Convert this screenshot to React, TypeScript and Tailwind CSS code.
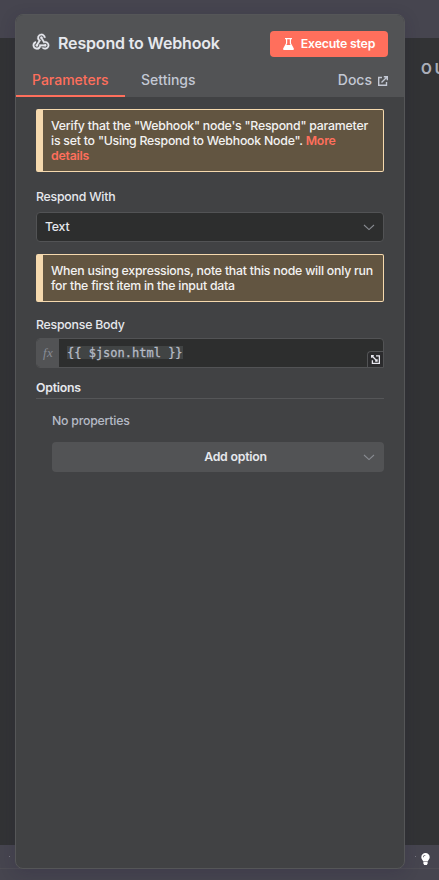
import { MdWebhook } from "react-icons/md";
import type { ReactNode } from "react";

function Chevron() {
  return (
    <svg className="h-[7px] w-3" viewBox="0 0 12 7" fill="none" stroke="#888b91" strokeWidth="1.1">
      <path d="M1 1l5 4.600L11 1" />
    </svg>
  );
}

function Notice({ children }: { children: ReactNode }) {
  return (
    <div className="rounded-[2px] border border-l-[7px] border-[#f5d9ae] bg-[#625541] py-2 pr-1 pl-2 leading-[15px] text-[#f3f2f1]">
      {children}
    </div>
  );
}

function Flask() {
  return (
    <svg className="h-3 w-[11px]" viewBox="0 0 11 12">
      <path fillRule="evenodd" fill="#fff" d="M2 0h7v1.200H8v4l2.700 5c.5 1-.1 1.800-1 1.800H1.300c-.9 0-1.500-.8-1-1.800L3 5.200v-4H2zM4.200 1.200v4.300L3.400 7h4.200L6.800 5.500V1.200z" />
    </svg>
  );
}

export default function App() {
  return (
    <div className="relative flex h-[880px] w-[439px] flex-col overflow-hidden bg-[#46454f] font-['Inter',sans-serif]">
      <div className="h-[38px] shrink-0" />
      <div className="h-[807px] shrink-0 bg-[#323335]">
        <div className="ml-[421px] pt-[22px] text-[14px] leading-[18px] font-bold tracking-[3px] whitespace-nowrap text-[#aaaeb9]">OU</div>
      </div>
      <div className="flex flex-1 justify-between pt-[11px] pl-[9px]">
        <i className="size-px bg-[#77757f]" />
        <i className="ml-[399px] size-px bg-[#77757f]" />
        <svg className="mt-[-3px] mr-[9px] h-3 w-[9px]" viewBox="0 0 9 12" fill="#fff">
          <path fillRule="evenodd" d="M4.500 0a4.200 4.200 0 0 0-4.200 4.200c0 1.800 1.500 2.700 2 4.300h4.400c.5-1.600 2-2.500 2-4.300A4.200 4.200 0 0 0 4.500 0zM2 4.200A2.300 2.300 0 0 1 4.400 2v.6A1.700 1.700 0 0 0 2.700 4.200z" />
          <path d="M2.400 9h4.200v1.600L5.800 12H3.200l-.8-1.400z" />
        </svg>
      </div>
      <div className="absolute inset-x-0 top-[868px] h-px bg-[#4e4d54]" />

      <main className="absolute top-[14px] left-[15px] flex h-[855px] w-[390px] flex-col overflow-hidden rounded-[8px] border border-[#555658] bg-[#414244] shadow-[0_4px_16px_rgba(35,25,60,0.2)]">
        <header className="flex h-[82px] shrink-0 flex-col bg-[#525355]">
          <div className="flex h-[57px] items-center px-4">
            <MdWebhook className="mb-[3px] -ml-px size-5 shrink-0 text-[#e5e7ed] [&>path:last-child]:stroke-[#e5e7ed] [&>path:last-child]:stroke-[0.3]" />
            <h1 className="mb-0.5 ml-[7px] flex-1 text-[16px] leading-5 font-semibold tracking-[-0.16px] whitespace-nowrap text-[#e6e8ed]">Respond to Webhook</h1>
            <button className="mt-px flex h-[26px] w-[118px] items-center justify-center gap-[7px] rounded-[4px] bg-[#ff6f5c] text-[12.3px] font-semibold tracking-[-0.2px] whitespace-nowrap text-white">
              <Flask />Execute step
            </button>
          </div>
          <nav className="flex h-[25px] text-[14px] leading-[16px] font-medium text-[#c3c8d4]">
            <span className="w-[109px] border-b-2 border-[#ff6f5c] pl-4 text-[#ff6f5c]">Parameters</span>
            <span className="ml-4">Settings</span>
            <span className="mr-4 ml-auto flex h-4 items-center gap-[6px]">
              Docs
              <svg className="mt-0.5 size-[10px]" viewBox="0 0 10 10" fill="none" stroke="currentColor" strokeWidth="1.4">
                <path d="M4 1.500H.7v7.800h7.800V6M3.500 6.500L9 1M5.800.7h3.500v3.500" />
              </svg>
            </span>
          </nav>
        </header>

        <section className="flex flex-col px-5 pt-3 text-[12.3px] font-medium tracking-[-0.22px] text-[#e6e8ed]">
          <Notice>
            Verify that the "Webhook" node's "Respond" parameter is set to "Using Respond to Webhook Node". <span className="font-semibold text-[#ff6f5c]">More<br />details</span>
          </Notice>
          <label className="mt-[17px] leading-4">Respond With</label>
          <div className="mt-[7px] flex h-[30px] items-center justify-between rounded-[4px] border border-[#525355] bg-[#2d2e2e] pr-2 pl-2">
            <span>Text</span><Chevron />
          </div>
          <div className="mt-3">
            <Notice>When using expressions, note that this node will only run for the first item in the input data</Notice>
          </div>
          <label className="mt-[15px] leading-4">Response Body</label>
          <div className="relative mt-[5px] flex h-[30px] overflow-hidden rounded-t-[4px] rounded-bl-[4px] border border-[#525355] bg-[#2d2e2e]">
            <span className="flex w-[22px] items-center justify-center bg-[#525355] pb-px font-['Liberation_Serif',serif] text-[13px] tracking-[0.4px] text-[#888c96] italic">fx</span>
            <code className="mt-[7px] ml-2 h-[13px] bg-[#414444] font-['DejaVu_Sans_Mono',monospace] text-[12px] leading-[15px] tracking-normal whitespace-pre text-[#b5bac5] [-webkit-text-stroke:0.3px_#b5bac5]">{"{{ $json.html }}"}</code>
            <span className="absolute right-0 bottom-0 flex size-4 items-center justify-center rounded-tl-[4px] border-t border-l border-[#525355] bg-[#2b2b2d]">
              <svg className="size-[9px]" viewBox="0 0 9 9" fill="none" stroke="#e8e8f0" strokeWidth="1.3">
                <path d="M5 .9h3.400v7.500H1.400V5.200M.8.800l5.200 5.200M.6 2.800V.6H2.800M6 4.200V6H4.200" />
              </svg>
            </span>
          </div>
          <h2 className="mt-[12px] border-b border-[#555658] pb-[2px] leading-4 font-semibold">Options</h2>
          <p className="mt-[14px] ml-4 leading-4 text-[#b5bac6]">No properties</p>
          <button className="mt-[13px] ml-4 flex h-[30px] items-center rounded-[4px] bg-[#525355] pl-[70px] font-semibold">
            <span className="flex-1 text-center">Add option</span>
            <span className="mr-[9px] ml-[14px]"><Chevron /></span>
          </button>
        </section>
      </main>
    </div>
  );
}
